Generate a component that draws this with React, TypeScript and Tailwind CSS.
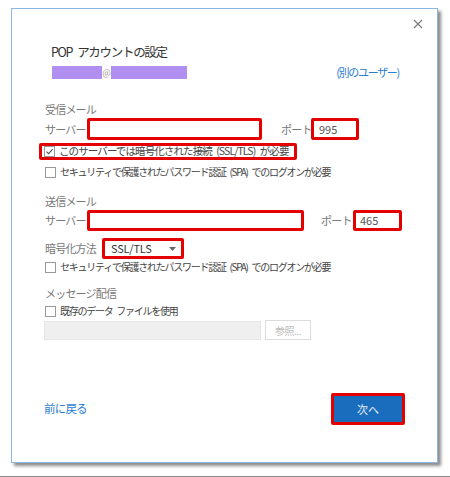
import React from "react";

const body = "font-['Noto_Sans_CJK_JP','Noto_Sans',sans-serif]";

function Check({ checked = false }: { checked?: boolean }) {
  return (
    <span className="inline-flex items-center justify-center w-[11px] h-[11px] border border-[#9a9a9a] bg-white shrink-0">
      {checked && (
        <svg width="9" height="9" viewBox="0 0 9 9" fill="none">
          <path d="M1.5 4.6 L3.6 6.7 L7.6 2.2" stroke="#555" strokeWidth="1.1" />
        </svg>
      )}
    </span>
  );
}

function CheckRow({ label, checked = false }: { label: string; checked?: boolean }) {
  return (
    <div className="flex items-center h-[16px] gap-x-[4px]">
      <Check checked={checked} />
      <span className="text-[10px] tracking-[-1.25px] text-[#444] whitespace-nowrap leading-none">{label}</span>
    </div>
  );
}

export default function App() {
  return (
    <div className={`w-[450px] h-[477px] bg-white flex flex-col ${body}`}>
      <div className="ml-[11px] mt-[8px] w-[427px] h-[455px] border border-[#8ab8e6] bg-white shadow-[3px_3px_3px_rgba(0,0,0,0.45)] flex flex-col pl-[33px] pr-[32px]">
        {/* close */}
        <div className="flex justify-end h-[33px] pt-[10px] -mr-[18px]">
          <svg width="10" height="10" viewBox="0 0 10 10">
            <path d="M1 1 L9 9 M9 1 L1 9" stroke="#777" strokeWidth="1.1" />
          </svg>
        </div>

        <div className="ml-[6px] h-[20px] leading-[20px] text-[12.5px] tracking-[-1.3px] text-[#333] whitespace-nowrap">
          {"POP\u2002アカウントの設定"}
        </div>

        <div className="mt-[4px] flex items-center h-[13px]">
          <div className="ml-[7px] w-[50px] h-[13px] bg-[#b18ff0]" />
          <span className="w-[9px] text-[9px] text-[#999] leading-none text-center">@</span>
          <div className="w-[76px] h-[13px] bg-[#b18ff0]" />
          <span className="ml-auto mr-[6px] text-[11px] tracking-[-1.3px] text-[#2b7dd2] whitespace-nowrap leading-none">
            (別のユーザー)
          </span>
        </div>

        <div className="mt-[22px] h-[16px] leading-[16px] text-[11px] tracking-[-0.8px] text-[#777]">受信メール</div>

        <div className="mt-[1px] flex items-center h-[22px]">
          <span className="w-[42px] text-[11px] tracking-[-0.8px] text-[#777] whitespace-nowrap">サーバー</span>
          <div className="w-[175px] h-[22px] border-[3px] border-[#e50000] rounded-[2px] bg-white" />
          <span className="ml-[19px] w-[30px] text-[11px] tracking-[-0.8px] text-[#777] whitespace-nowrap">ポート</span>
          <div className="w-[48px] h-[22px] border-[3px] border-[#e50000] rounded-[2px] bg-white flex items-center pl-[5px] text-[11px] text-[#555] leading-none">
            995
          </div>
        </div>

        <div className="mt-[3px] -ml-[6px] w-[258px] h-[17px] border-[3px] border-[#e50000] rounded-[2px] flex items-center pl-[2px] gap-x-[4px]">
          <Check checked />
          <span className="text-[10.5px] tracking-[-0.9px] text-[#444] whitespace-nowrap leading-none">
            {"このサーバーでは暗号化された接続\u2002(SSL/TLS)\u2002が必要"}
          </span>
        </div>

        <div className="mt-[4px]">
          <CheckRow label={"セキュリティで保護されたパスワード認証\u2002(SPA)\u2002でのログオンが必要"} />
        </div>

        <div className="mt-[13px] h-[16px] leading-[16px] text-[11px] tracking-[-0.8px] text-[#777]">送信メール</div>

        <div className="mt-[1px] flex items-center h-[21px]">
          <span className="w-[42px] text-[11px] tracking-[-0.8px] text-[#777] whitespace-nowrap">サーバー</span>
          <div className="w-[217px] h-[21px] border-[3px] border-[#e50000] rounded-[2px] bg-white" />
          <span className="ml-[17px] w-[32px] text-[11px] tracking-[-0.8px] text-[#777] whitespace-nowrap">ポート</span>
          <div className="w-[49px] h-[21px] border-[3px] border-[#e50000] rounded-[2px] bg-white flex items-center pl-[4px] text-[11px] text-[#555] leading-none">
            465
          </div>
        </div>

        <div className="mt-[7px] flex items-center h-[21px]">
          <span className="w-[57px] text-[11px] tracking-[-0.8px] text-[#777] whitespace-nowrap">暗号化方法</span>
          <div className="w-[82px] h-[21px] border-[3px] border-[#e50000] rounded-[2px] bg-white flex items-center pl-[6px] pr-[5px]">
            <span className="text-[11px] tracking-[-0.2px] text-[#333] leading-none">SSL/TLS</span>
            <svg className="ml-auto" width="7" height="4" viewBox="0 0 7 4">
              <path d="M0 0 L7 0 L3.5 4 Z" fill="#666" />
            </svg>
          </div>
        </div>

        <div className="mt-[0px]">
          <CheckRow label={"セキュリティで保護されたパスワード認証\u2002(SPA)\u2002でのログオンが必要"} />
        </div>

        <div className="mt-[10px] h-[16px] leading-[16px] text-[11px] tracking-[-0.8px] text-[#777]">メッセージ配信</div>

        <div className="mt-[2px]">
          <CheckRow label={"既存のデータ\u2002ファイルを使用"} />
        </div>

        <div className="mt-[1px] -ml-[1px] flex items-center gap-x-[4px]">
          <div className="w-[217px] h-[19px] bg-[#efefef] border border-[#e6e6e6]" />
          <div className="w-[46px] h-[20px] border border-[#dcdcdc] bg-white flex items-center justify-center text-[10px] tracking-[-0.5px] text-[#bbb]">
            参照...
          </div>
        </div>

        <div className="mt-[53px] flex items-center justify-between h-[32px] -ml-[1px]">
          <span className="text-[11.5px] tracking-[-0.8px] text-[#2b7dd2] leading-none">前に戻る</span>
          <div className="w-[74px] h-[32px] border-[3px] border-[#e50000] rounded-[2px] bg-[#1a6dbd] flex items-center justify-center">
            <span className="text-[11px] text-white/90 leading-none">次へ</span>
          </div>
        </div>
      </div>
      <div className="mt-auto h-[1px] bg-[#8a8a8a]" />
    </div>
  );
}
